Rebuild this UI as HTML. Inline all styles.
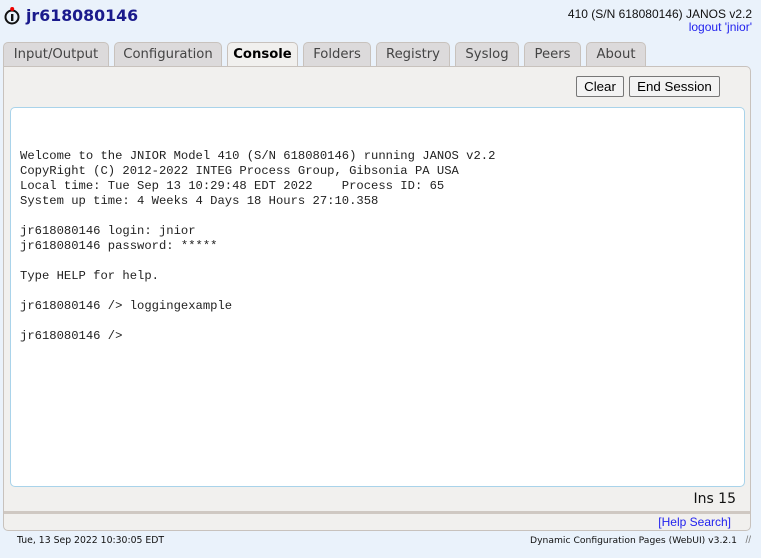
<!DOCTYPE html>
<html><head><style>
body{margin:0;width:761px;height:558px;background:#eaf2fb;font-family:"Liberation Sans",sans-serif;position:relative;overflow:hidden}
.a{position:absolute}
.title{left:26px;top:6px;font-size:15.8px;font-weight:bold;color:#1a1a8c;font-family:"DejaVu Sans",sans-serif}
.tab{position:absolute;top:42px;height:24px;background:#dcdadb;border:1px solid #c8c2bd;border-bottom:none;border-radius:5px 5px 0 0;font-size:13.2px;color:#444;text-align:center;line-height:24px;font-family:"DejaVu Sans",sans-serif;box-sizing:border-box}
.tab.on{background:#f1f0ee;color:#000;font-weight:bold;height:25px}
.panel{left:3px;top:66px;width:748px;height:465px;background:#f1f0ee;border:1px solid #c8c2bd;border-radius:0 5px 5px 5px;box-sizing:border-box}
.btn{position:absolute;top:76px;height:21px;border:1px solid #777;border-radius:2px;background:#f3f3f3;font-size:13.3px;line-height:19px;text-align:center;box-sizing:border-box}
.con{left:10px;top:107px;width:735px;height:380px;background:#fff;border:1px solid #a9d3ea;border-radius:5px;box-sizing:border-box}
pre{position:absolute;left:20px;top:149px;margin:0;font-family:"Liberation Mono",monospace;font-size:12.2px;line-height:15px;color:#222}
</style></head><body>
<svg class="a" style="left:4px;top:6px" width="18" height="20" viewBox="0 0 18 20"><circle cx="8" cy="11" r="6.5" fill="none" stroke="#111" stroke-width="2"/><rect x="7" y="8" width="2.4" height="7" fill="#111"/><circle cx="8.2" cy="3" r="2" fill="#e00"/></svg>
<div class="a title">jr618080146</div>
<div class="a" style="right:9px;top:7px;font-size:12px;color:#111">410 (S/N 618080146) JANOS v2.2</div>
<div class="a" style="right:9px;top:20px;font-size:12px;color:#2222ee">logout 'jnior'</div>
<div class="tab" style="left:3px;width:106px">Input/Output</div>
<div class="tab" style="left:114px;width:108px">Configuration</div>
<div class="tab on" style="left:227px;width:71px">Console</div>
<div class="tab" style="left:303px;width:68px">Folders</div>
<div class="tab" style="left:376px;width:74px">Registry</div>
<div class="tab" style="left:455px;width:64px">Syslog</div>
<div class="tab" style="left:524px;width:57px">Peers</div>
<div class="tab" style="left:586px;width:60px">About</div>
<div class="a panel"></div>
<div class="btn" style="left:576px;width:48px">Clear</div>
<div class="btn" style="left:629px;width:91px">End Session</div>
<div class="a con"></div>
<pre>Welcome to the JNIOR Model 410 (S/N 618080146) running JANOS v2.2
CopyRight (C) 2012-2022 INTEG Process Group, Gibsonia PA USA
Local time: Tue Sep 13 10:29:48 EDT 2022    Process ID: 65
System up time: 4 Weeks 4 Days 18 Hours 27:10.358

jr618080146 login: jnior
jr618080146 password: *****

Type HELP for help.

jr618080146 /&gt; loggingexample

jr618080146 /&gt;</pre>
<div class="a" style="right:25px;top:491px;font-size:14px;color:#111;font-family:'DejaVu Sans',sans-serif">Ins 15</div>
<div class="a" style="left:4px;top:511px;width:746px;height:3px;background:#cfc8c2"></div>
<div class="a" style="right:30px;top:515px;font-size:12px;color:#2222ee">[Help Search]</div>
<div class="a" style="left:17px;top:535px;font-size:9.3px;color:#111;font-family:'DejaVu Sans',sans-serif">Tue, 13 Sep 2022 10:30:05 EDT</div>
<div class="a" style="right:24px;top:535px;font-size:9.2px;color:#111;font-family:'DejaVu Sans',sans-serif">Dynamic Configuration Pages (WebUI) v3.2.1</div>
<div class="a" style="right:10px;top:535px;font-size:10px;color:#777">//</div>
</body></html>
